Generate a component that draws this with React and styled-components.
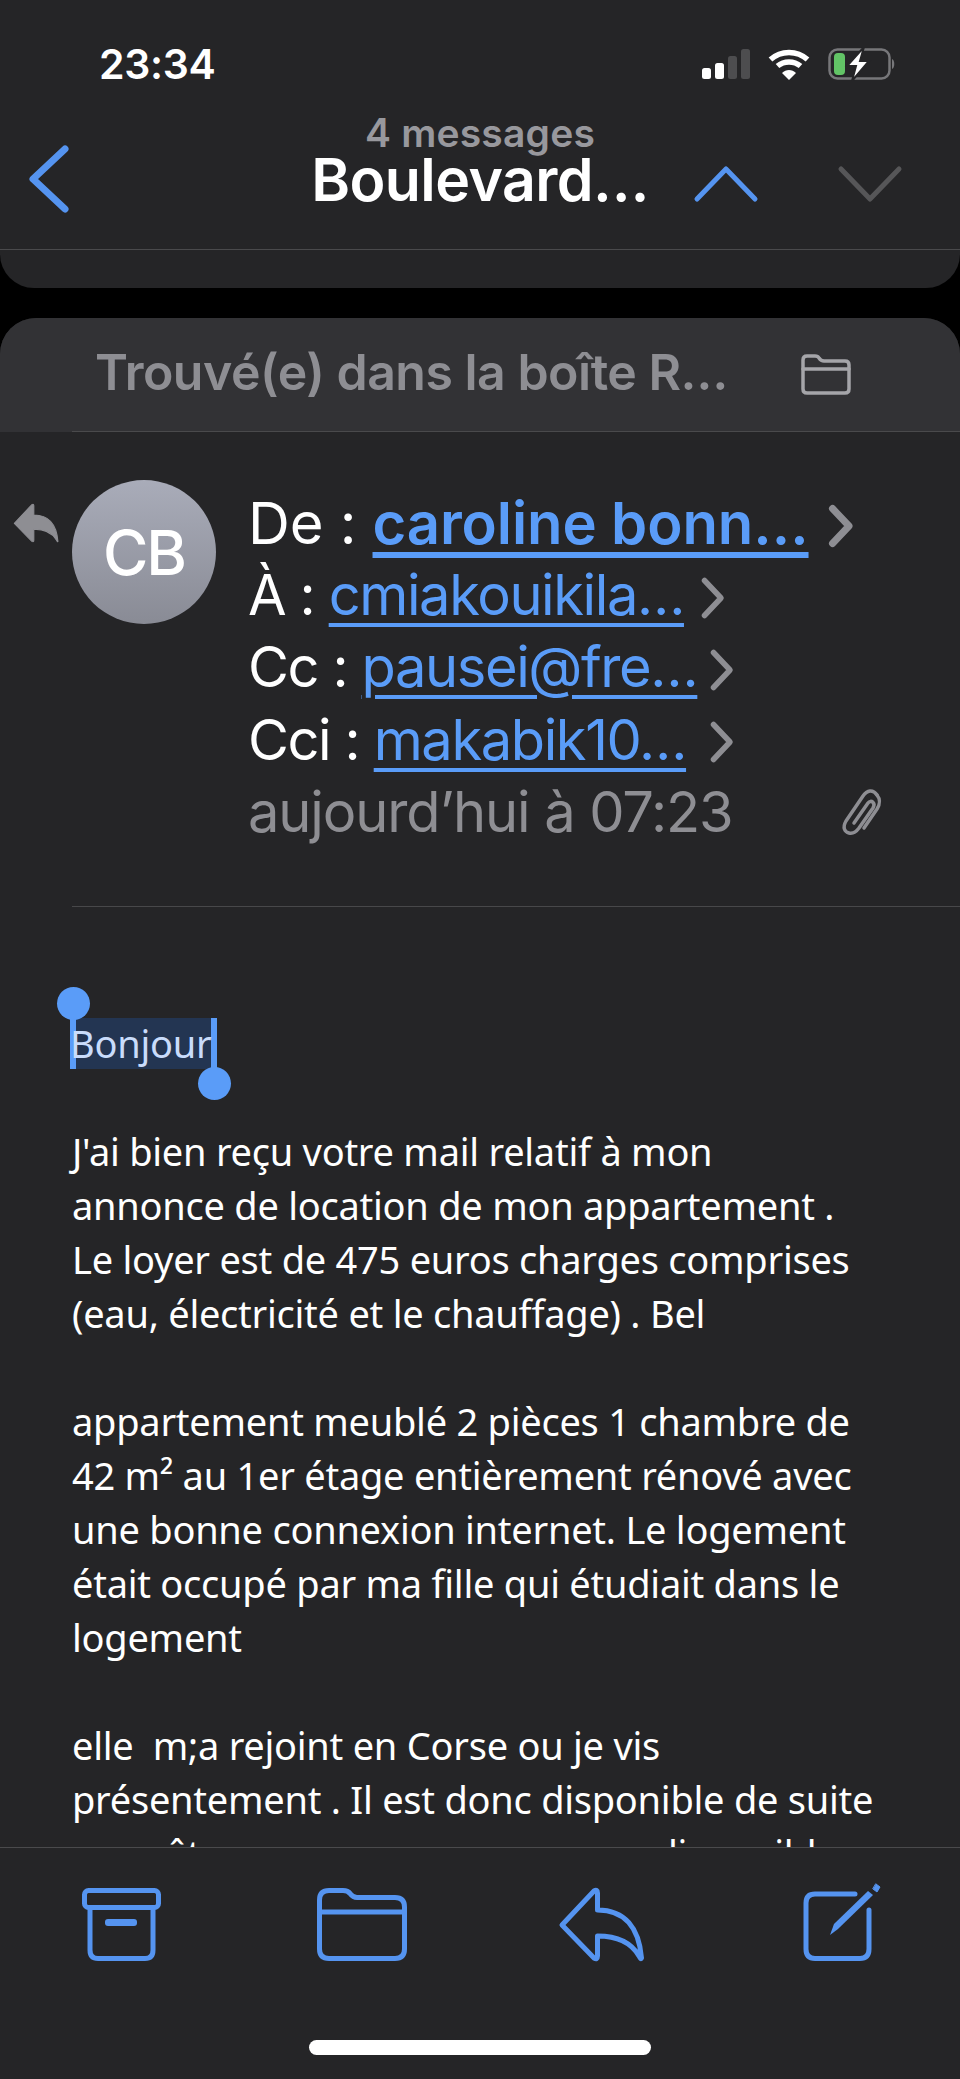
import React from "react";
import styled, { createGlobalStyle } from "styled-components";

const BLUE = "#5a9cf8";
const TINT = "#5594f0";

const GlobalStyle = createGlobalStyle`
  html, body {
    margin: 0;
    padding: 0;
    background: #000;
  }
  * {
    box-sizing: border-box;
  }
`;

const Phone = styled.div`
  width: 960px;
  height: 2079px;
  display: flex;
  flex-direction: column;
  overflow: hidden;
  background: #000;
  font-family: Inter, "Liberation Sans", sans-serif;
  color: #fff;
`;

const Top = styled.header`
  height: 250px;
  flex: none;
  background: #252527;
  border-bottom: 1px solid #4a4a4c;
`;

const StatusBar = styled.div`
  height: 100px;
  display: flex;
  align-items: center;
  justify-content: space-between;
  padding: 28px 64px 0 99px;
`;

const Time = styled.div`
  font-size: 41px;
  font-weight: 600;
  line-height: 44px;
  letter-spacing: -0.3px;
`;

const StatusIcons = styled.div`
  display: flex;
  align-items: center;
  gap: 18px;
`;

const NavBar = styled.nav`
  height: 149px;
  display: grid;
  grid-template-columns: 1fr auto 1fr;
  align-items: center;
`;

const NavLeft = styled.div`
  padding: 9px 0 0 29px;
  display: flex;
`;

const NavRight = styled.div`
  display: flex;
  justify-content: flex-end;
  gap: 80px;
  padding: 19px 58px 0 0;
`;

const NavTitle = styled.div`
  display: flex;
  flex-direction: column;
  align-items: center;
  margin-bottom: 27px;
`;

const Count = styled.div`
  font-size: 39px;
  font-weight: 600;
  line-height: 38px;
  color: #98989d;
  letter-spacing: 0.2px;
`;

const Subject = styled.div`
  font-size: 59px;
  font-weight: 600;
  line-height: 56px;
  letter-spacing: -0.6px;
`;

const PrevCard = styled.div`
  height: 38px;
  flex: none;
  background: #252527;
  border-radius: 0 0 34px 34px;
`;

const Mail = styled.main`
  margin-top: 30px;
  flex: 1;
  min-height: 0;
  display: flex;
  flex-direction: column;
  overflow: hidden;
  background: #252527;
  border-radius: 36px 36px 0 0;
`;

const Found = styled.div`
  flex: none;
  background: #323235;
`;

const FoundInner = styled.div`
  height: 114px;
  margin-left: 72px;
  padding: 0 110px 0 23px;
  display: flex;
  align-items: center;
  justify-content: space-between;
  border-bottom: 1px solid #4a4a4c;
  color: #8e8e93;
  font-size: 50px;
  font-weight: 600;
  letter-spacing: -0.5px;
`;

const FoundLabel = styled.span`
  margin-top: -5px;
`;

const Head = styled.section`
  flex: none;
  height: 474px;
  margin-left: 12px;
  padding-top: 48px;
  display: flex;
  align-items: flex-start;
  position: relative;
`;

const ReplyMark = styled.div`
  width: 60px;
  flex: none;
  margin-top: 23px;
`;

const Avatar = styled.div`
  width: 144px;
  height: 144px;
  flex: none;
  border-radius: 50%;
  background: linear-gradient(#a9acb9, #898b95);
  display: flex;
  align-items: center;
  justify-content: center;
  font-size: 62px;
  font-weight: 500;
  letter-spacing: -2px;
`;

const Recipients = styled.div`
  margin-left: 32px;
  flex: 1;
  padding-top: 7px;
`;

const Row = styled.div`
  height: 72.2px;
  line-height: 72px;
  font-size: ${(p) => (p.$lead ? 58 : 56)}px;
  letter-spacing: ${(p) => (p.$lead ? -0.1 : -1.4)}px;
  display: flex;
  align-items: center;
  white-space: pre;
`;

const Address = styled.span`
  color: ${BLUE};
  font-weight: ${(p) => (p.$strong ? 600 : 400)};
  text-decoration: underline;
  text-decoration-thickness: ${(p) => (p.$strong ? 6 : 4)}px;
  text-underline-offset: 8px;
`;

const Chevron = styled.span`
  display: flex;
  margin-left: ${(p) => p.$gap}px;
  margin-top: 5px;
`;

const DateRow = styled(Row)`
  color: #8e8e93;
  justify-content: space-between;
  padding-right: 77px;
  letter-spacing: -1.1px;
`;

const Divider = styled.div`
  flex: none;
  height: 1px;
  margin-left: 72px;
  background: #48484a;
`;

const Body = styled.article`
  flex: 1;
  min-height: 0;
  padding: 109px 0 0 72px;
  font-family: "Noto Sans", "Open Sans", sans-serif;
  font-size: 38px;
  line-height: 54px;
  letter-spacing: -0.25px;
  white-space: pre;
`;

const Line = styled.div`
  height: 54px;
`;

const Selected = styled.span`
  position: relative;
  display: inline-block;
  height: 51px;
  line-height: 50px;
  margin: 1px 0 0 -2px;
  border-left: 6px solid ${BLUE};
  border-right: 6px solid ${BLUE};
  background: #233552;
  color: #c9dcfb;
  text-indent: -6px;
`;

const Handle = styled.span`
  position: absolute;
  width: 33px;
  height: 33px;
  border-radius: 50%;
  background: ${BLUE};
  ${(p) =>
    p.$end
      ? "right: -19.5px; bottom: -31px;"
      : "left: -19.5px; top: -31px;"}
`;

const Toolbar = styled.footer`
  height: 232px;
  flex: none;
  background: #252527;
  border-top: 1px solid #4a4a4c;
  display: flex;
  flex-direction: column;
  align-items: center;
`;

const ToolIcons = styled.div`
  width: 100%;
  display: flex;
  justify-content: space-between;
  align-items: flex-end;
  padding: 35px 79px 0 82px;
  height: 113px;
`;

const HomeBar = styled.div`
  width: 342px;
  height: 15px;
  margin-top: 79px;
  border-radius: 8px;
  background: #fff;
`;

const Glyph = ({ w, h, color = "none", stroke, sw, children }) => (
  <svg
    width={w}
    height={h}
    viewBox={`0 0 ${w} ${h}`}
    fill={color}
    stroke={stroke}
    strokeWidth={sw}
    strokeLinecap="round"
    strokeLinejoin="round"
    style={{ display: "block", flex: "none", overflow: "visible" }}
  >
    {children}
  </svg>
);

const Signal = () => (
  <svg width="48" height="30" viewBox="0 0 48 30" style={{ display: "block" }}>
    <rect x="0" y="19" width="9" height="11" rx="2.5" fill="#fff" />
    <rect x="13" y="14" width="9" height="16" rx="2.5" fill="#fff" />
    <rect x="26" y="7" width="9" height="23" rx="2.5" fill="#4d4d4f" />
    <rect x="39" y="0" width="9" height="30" rx="2.5" fill="#4d4d4f" />
  </svg>
);

const Wifi = () => (
  <svg width="42" height="31" viewBox="0 0 42 31" fill="none" style={{ display: "block" }}>
    <path d="M2.5 10.5 C13 1 29 1 39.5 10.5" stroke="#fff" strokeWidth="5.5" />
    <path d="M9.5 17 C16 11.5 26 11.5 32.5 17" stroke="#fff" strokeWidth="5.5" />
    <path d="M14 24 L21 31 L28 24 C24 20 18 20 14 24 Z" fill="#fff" />
  </svg>
);

const Battery = () => (
  <svg width="68" height="34" viewBox="0 0 68 34" fill="none" style={{ display: "block" }}>
    <rect x="1.5" y="2.5" width="60" height="29" rx="8" stroke="#77777a" strokeWidth="2.5" />
    <path d="M64 12 C67 13 67 21 64 22 Z" fill="#77777a" />
    <rect x="6" y="6" width="11" height="22" rx="4" fill="#62c466" />
    <path d="M36 0 L19 19 L28 19 L24 34 L41 14 L32 14 Z" fill="#fff" stroke="#252527" strokeWidth="2" />
  </svg>
);

const Paperclip = () => (
  <Glyph w={43} h={46} stroke="#8e8e93" sw={3.5}>
    <path d="M37 6 C33 0 27 1 23 7 L6 32 C2 39 5 43 9 44 C13 45 16 43 19 39 L33 19 C36 14 31 10 28 14 L14 34" />
    <path d="M37 6 C41 11 40 15 37 20 L24 39" />
  </Glyph>
);

const FolderSmall = () => (
  <Glyph w={48} h={40} stroke="#a5a5a9" sw={3.5}>
    <path d="M5 38 H43 Q47 38 47 34 V10 Q47 6 43 6 H22 Q19 6 17 3 Q16 1 13 1 H5 Q1 1 1 5 V34 Q1 38 5 38 Z" />
    <path d="M1 14 H47" />
  </Glyph>
);

const ArchiveIcon = () => (
  <Glyph w={79} h={73} stroke={TINT} sw={5}>
    <rect x="2.5" y="2.5" width="74" height="17" rx="4" />
    <path d="M8 20 V62 Q8 70.5 16 70.5 H63 Q71 70.5 71 62 V20" />
    <rect x="23" y="31" width="32" height="7" rx="3" fill={TINT} stroke="none" />
  </Glyph>
);

const FolderIcon = () => (
  <Glyph w={90} h={73} stroke={TINT} sw={5}>
    <path d="M12 70.5 H78 Q87.5 70.5 87.5 61 V19 Q87.5 9.5 78 9.5 H40 Q36 9.5 33 5.5 Q31 2.5 26 2.5 H12 Q2.5 2.5 2.5 12 V61 Q2.5 70.5 12 70.5 Z" />
    <path d="M2.5 24 H87.5" />
  </Glyph>
);

const ReplyIcon = ({ color = "none", stroke = TINT, sw = 5, w = 85, h = 73, shift = 0 }) => (
  <svg
    width={w}
    height={h}
    viewBox={`${shift} 0 85 73`}
    fill={color}
    stroke={stroke}
    strokeWidth={sw}
    strokeLinejoin="round"
    style={{ display: "block", flex: "none", overflow: "visible" }}
  >
    <path d="M3 37 L35 3 Q38.5 1 38.5 5 V22 C66 22 80 40 82.5 70 Q82 72 80 68 C72 54 58 48 38.5 48 V68 Q38.5 72 35 70 Z" />
  </svg>
);

const ComposeIcon = () => (
  <Glyph w={78} h={78} stroke={TINT} sw={5}>
    <path d="M52 11 H12 Q3 11 3 20 V66 Q3 75.5 12 75.5 H57 Q66 75.5 66 66 V27" />
    <path d="M27 52 L31 41 L65 8 L70 12 L35 46 Z" fill={TINT} stroke="none" />
    <path d="M73 1 L77 4 L74 9 L70 6 Z" fill={TINT} stroke={TINT} strokeWidth={1} />
  </Glyph>
);

const RowChevron = ({ gap, sw = 5.5 }) => (
  <Chevron $gap={gap}>
    <Glyph w={24} h={42} stroke="#8e8e93" sw={sw}>
      <path d="M3.5 3.5 L20 21 L3.5 38.5" />
    </Glyph>
  </Chevron>
);

const message = [
  "J'ai bien reçu votre mail relatif à mon",
  "annonce de location de mon appartement .",
  "Le loyer est de 475 euros charges comprises",
  "(eau, électricité et le chauffage) . Bel",
  "",
  "appartement meublé 2 pièces 1 chambre de",
  "42 m² au 1er étage entièrement rénové avec",
  "une bonne connexion internet. Le logement",
  "était occupé par ma fille qui étudiait dans le",
  "logement",
  "",
  "elle  m;a rejoint en Corse ou je vis",
  "présentement . Il est donc disponible de suite",
  "pour être occuper nous sommes disponible",
];

export default function App() {
  return (
    <Phone>
      <GlobalStyle />
      <Top>
        <StatusBar>
          <Time>23:34</Time>
          <StatusIcons>
            <Signal />
            <Wifi />
            <Battery />
          </StatusIcons>
        </StatusBar>
        <NavBar>
          <NavLeft>
            <Glyph w={40} h={68} stroke={TINT} sw={7}>
              <path d="M36 4 L4 34 L36 64" />
            </Glyph>
          </NavLeft>
          <NavTitle>
            <Count>4 messages</Count>
            <Subject>Boulevard…</Subject>
          </NavTitle>
          <NavRight>
            <Glyph w={64} h={36} stroke={TINT} sw={5}>
              <path d="M3 33 L32 3 L61 33" />
            </Glyph>
            <Glyph w={64} h={36} stroke="#565658" sw={5}>
              <path d="M3 3 L32 33 L61 3" />
            </Glyph>
          </NavRight>
        </NavBar>
      </Top>
      <PrevCard />
      <Mail>
        <Found>
          <FoundInner>
            <FoundLabel>Trouvé(e) dans la boîte R…</FoundLabel>
            <FolderSmall />
          </FoundInner>
        </Found>
        <Head>
          <ReplyMark>
            <ReplyIcon color="#8e8e93" stroke="#8e8e93" sw={2} w={48} h={40} />
          </ReplyMark>
          <Avatar>CB</Avatar>
          <Recipients>
            <Row $lead>
              De : <Address $strong>caroline bonn…</Address>
              <RowChevron gap={20} sw={7} />
            </Row>
            <Row>
              À : <Address>cmiakouikila…</Address>
              <RowChevron gap={17} />
            </Row>
            <Row>
              Cc : <Address>pausei@fre…</Address>
              <RowChevron gap={13} />
            </Row>
            <Row>
              Cci : <Address>makabik10…</Address>
              <RowChevron gap={24} />
            </Row>
            <DateRow>
              <span>aujourd’hui à 07:23</span>
              <Paperclip />
            </DateRow>
          </Recipients>
        </Head>
        <Divider />
        <Body>
          <Line>
            <Selected>
              <Handle />
              Bonjour
              <Handle $end />
            </Selected>
          </Line>
          <Line />
          {message.map((text, i) => (
            <Line key={i}>{text}</Line>
          ))}
        </Body>
      </Mail>
      <Toolbar>
        <ToolIcons>
          <ArchiveIcon />
          <FolderIcon />
          <ReplyIcon shift={3} />
          <ComposeIcon />
        </ToolIcons>
        <HomeBar />
      </Toolbar>
    </Phone>
  );
}
